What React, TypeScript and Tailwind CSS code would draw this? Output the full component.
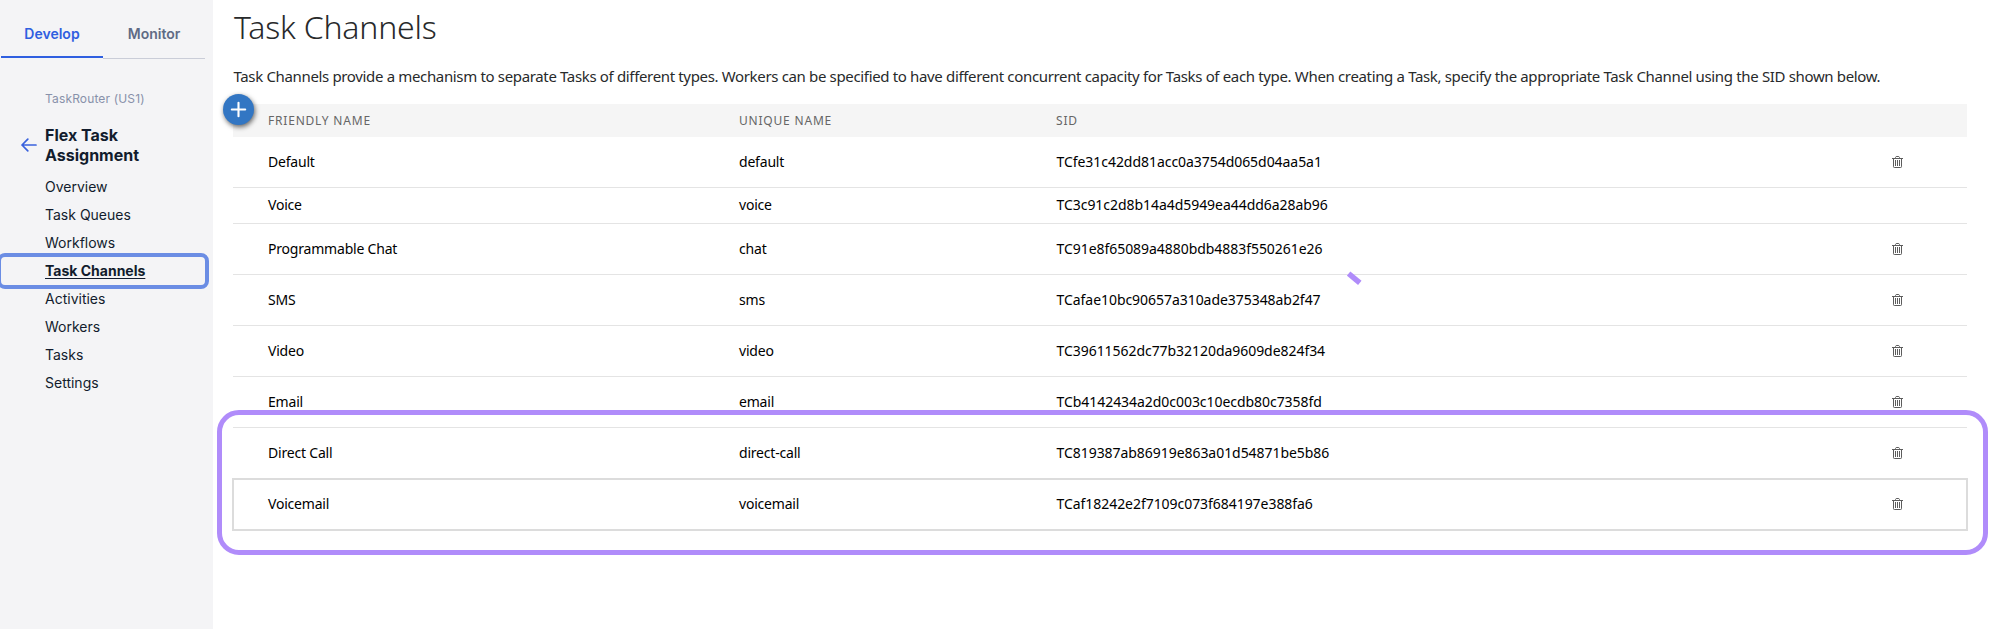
import { Plus } from "lucide-react";

type Channel = { name: string; unique: string; sid: string; removable?: boolean };

const channels: Channel[] = [
  { name: "Default", unique: "default", sid: "TCfe31c42dd81acc0a3754d065d04aa5a1", removable: true },
  { name: "Voice", unique: "voice", sid: "TC3c91c2d8b14a4d5949ea44dd6a28ab96" },
  { name: "Programmable Chat", unique: "chat", sid: "TC91e8f65089a4880bdb4883f550261e26", removable: true },
  { name: "SMS", unique: "sms", sid: "TCafae10bc90657a310ade375348ab2f47", removable: true },
  { name: "Video", unique: "video", sid: "TC39611562dc77b32120da9609de824f34", removable: true },
  { name: "Email", unique: "email", sid: "TCb4142434a2d0c003c10ecdb80c7358fd", removable: true },
  { name: "Direct Call", unique: "direct-call", sid: "TC819387ab86919e863a01d54871be5b86", removable: true },
  { name: "Voicemail", unique: "voicemail", sid: "TCaf18242e2f7109c073f684197e388fa6", removable: true },
];

const links = ["Overview", "Task Queues", "Workflows", "Task Channels", "Activities", "Workers", "Tasks", "Settings"];

function TrashIcon() {
  return (
    <svg width="11" height="12" viewBox="0 0 11 12" fill="none" stroke="#5c5c5c" strokeWidth="1">
      <path d="M0 2.5h11" />
      <path d="M3.5 2.5v-1l.7-1h2.6l.7 1v1" />
      <path d="M1.5 2.5v8.2q0 .8.8.8h6.4q.8 0 .8-.8V2.5" />
      <path d="M3.5 4v6M5.5 4v6M7.5 4v6" />
    </svg>
  );
}

function BackArrow() {
  return (
    <svg width="16" height="14" viewBox="0 0 16 14" fill="none" stroke="#3a62dd" strokeWidth="1.7" strokeLinecap="round" strokeLinejoin="round">
      <path d="M15 7H1M6.8 1.2L1 7l5.8 5.8" />
    </svg>
  );
}

function Sidebar() {
  return (
    <aside className="w-[213px] shrink-0 bg-[#f4f4f6] font-['Inter',sans-serif] text-[#121c2d]">
      <div className="ml-px flex h-[59px] w-[204px] text-sm font-semibold">
        <div className="flex h-[58px] w-[102px] justify-center border-b-2 border-[#2f5fe0] pt-6 leading-5 text-[#2f5fe0]">
          Develop
        </div>
        <div className="flex w-[102px] justify-center border-b border-[#cacdd8] pt-6 leading-5 text-[#606b85]">Monitor</div>
      </div>
      <div className="ml-[45px] mt-[30px] text-xs leading-5 tracking-[0.15px] text-[#8891aa]">TaskRouter (US1)</div>
      <div className="mt-[16px] flex items-center">
        <div className="-mt-px ml-[21px] w-6">
          <BackArrow />
        </div>
        <h2 className="text-base font-bold leading-5">
          Flex Task
          <br />
          Assignment
        </h2>
      </div>
      <nav className="mt-[8px] text-sm">
        {links.map((label) =>
          label === "Task Channels" ? (
            <div key={label} className="relative flex h-7 items-center pl-[45px]">
              <span className="font-bold underline underline-offset-2">{label}</span>
              <div className="absolute -left-[3px] -top-1 h-9 w-[212px] rounded-lg border-4 border-[#6b8de4]" />
            </div>
          ) : (
            <div key={label} className="flex h-7 items-center pl-[45px]">
              {label}
            </div>
          ),
        )}
      </nav>
    </aside>
  );
}

function Row({ channel, last }: { channel: Channel; last: boolean }) {
  const grid = "grid grid-cols-[471px_317px_836px_1fr] items-center text-sm text-black";
  const height = channel.removable ? "h-[51px]" : "h-[36px] pb-px";
  const edge = last
    ? "-mx-px -mt-px h-[53px] border-2 border-[#dcdcdc] pb-px pl-[34px]"
    : `${height} border-b border-[#e4e4e4] pl-[35px]`;
  return (
    <div className={`${grid} ${edge}`}>
      <span className="tracking-[-0.2px]">{channel.name}</span>
      <span className="tracking-[-0.2px]">{channel.unique}</span>
      <span className="pl-[0.5px] tracking-[-0.05px]">{channel.sid}</span>
      <span>{channel.removable && <TrashIcon />}</span>
    </div>
  );
}

export default function App() {
  return (
    <div className="flex h-[629px] w-[2006px] overflow-hidden bg-white">
      <Sidebar />
      <main className="relative flex-1 pl-5 font-['Noto_Sans',sans-serif]">
        <h1 className="mt-[7px] pl-px text-[32px] font-light leading-10 tracking-[-0.2px] text-[#282a2b]">Task Channels</h1>
        <p className="mt-[19px] whitespace-nowrap pl-[0.5px] text-[15px] leading-5 tracking-[-0.345px] text-[#282a2b]">
          Task Channels provide a mechanism to separate Tasks of different types. Workers can be specified to have different
          concurrent capacity for Tasks of each type. When creating a Task, specify the appropriate Task Channel using the SID
          shown below.
        </p>
        <section className="mt-[18px] w-[1734px]">
          <div className="grid h-[33px] grid-cols-[471px_317px_1fr] items-center bg-[#f5f5f5] pl-[35px] text-xs tracking-[0.8px] text-[#666]">
            <span>FRIENDLY NAME</span>
            <span>UNIQUE NAME</span>
            <span>SID</span>
          </div>
          {channels.map((channel, i) => (
            <Row key={channel.sid} channel={channel} last={i === channels.length - 1} />
          ))}
        </section>
        <button className="absolute left-[10px] top-[94px] flex size-[31px] items-center justify-center rounded-full bg-[#3276c3] text-white shadow-[1px_2px_5px_rgba(0,0,0,0.6)]">
          <Plus size={23} strokeWidth={2.2} />
        </button>
        <svg className="absolute left-[1134px] top-[271px]" width="15" height="15" viewBox="0 0 15 15">
          <path d="M1.6 2.6L12.8 11.8" stroke="#b08cfa" strokeWidth="5.5" />
        </svg>
        <div className="absolute left-1 top-[410px] h-[145px] w-[1771px] rounded-[22px] border-5 border-[#b08cfa]" />
      </main>
    </div>
  );
}
